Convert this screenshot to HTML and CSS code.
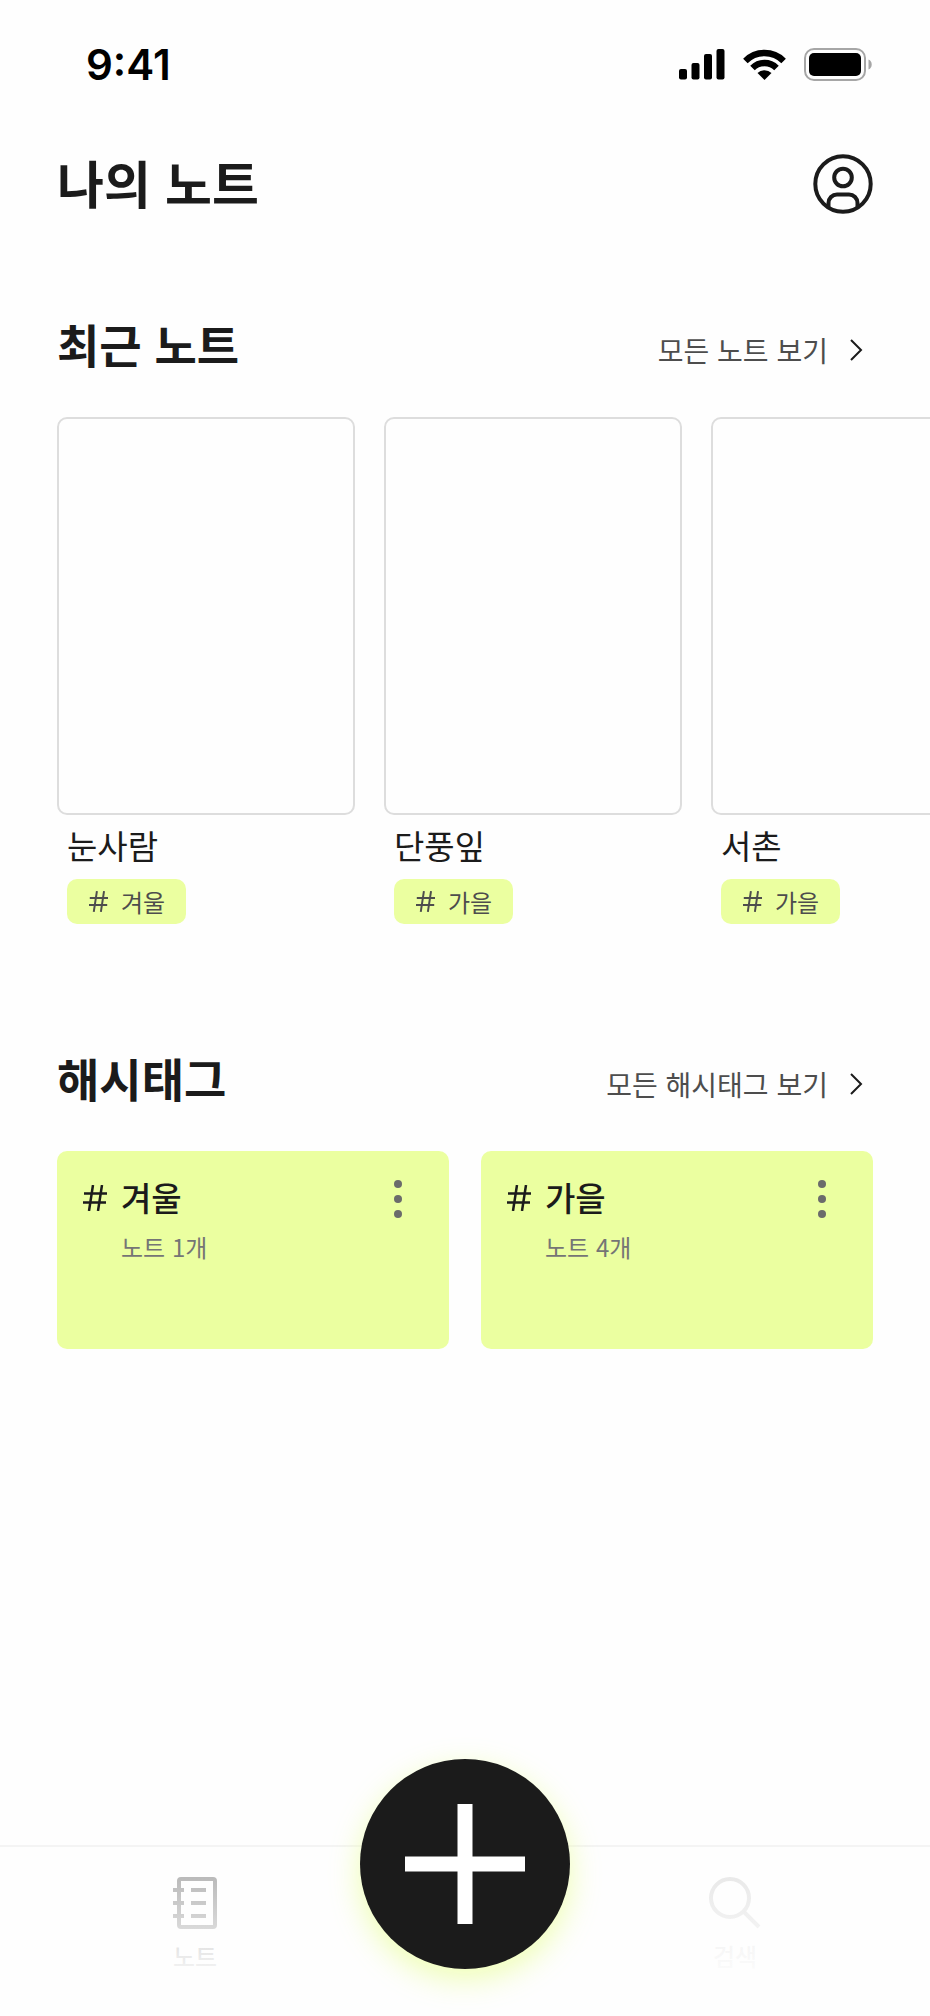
FILE: index.html
```html
<!DOCTYPE html>
<html lang="ko">
<head>
    <meta charset="UTF-8">
    <meta name="viewport" content="width=device-width, initial-scale=1.0">
    <title>나의 노트</title>
    <link rel="stylesheet" href="styles.css">
</head>
<body>
<svg class="sprite" aria-hidden="true">
    <symbol id="hash" viewBox="0 0 24 26">
        <path d="M10 0 6 26M19 0 15 26M1 8.5H24M0 17.5H23"/>
    </symbol>
    <symbol id="chevron" viewBox="0 0 13 22">
        <path d="M1 1 11 11 1 21"/>
    </symbol>
    <symbol id="dots" viewBox="0 0 8 38">
        <circle cx="4" cy="4" r="4"/>
        <circle cx="4" cy="19" r="4"/>
        <circle cx="4" cy="34" r="4"/>
    </symbol>
</svg>

<div class="status-bar">
    <span class="time">9:41</span>
    <div class="status-icons">
        <svg width="46" height="31" viewBox="0 0 46 31">
            <rect x="0" y="20" width="8" height="10.5" rx="2"/>
            <rect x="12.5" y="14" width="8" height="16.5" rx="2"/>
            <rect x="25" y="5" width="8" height="25.5" rx="2"/>
            <rect x="37.5" y="0" width="8" height="30.5" rx="2"/>
        </svg>
        <svg width="43" height="31" viewBox="0 0 43 31">
            <path class="arc" d="M2.4 11.9a27 27 0 0 1 38.2 0M9.5 19a17 17 0 0 1 24 0"/>
            <path d="M21.5 31 14.5 24a10 10 0 0 1 14 0z"/>
        </svg>
        <svg width="69" height="33" viewBox="0 0 69 33">
            <rect class="shell" x="1" y="1" width="60" height="31" rx="9"/>
            <rect x="5" y="5" width="52" height="23" rx="5"/>
            <path class="cap" d="M64.5 11.5a5.5 5.5 0 0 1 0 10z"/>
        </svg>
    </div>
</div>

<header>
    <h1>나의 노트</h1>
    <button class="btn-profile" aria-label="내 프로필">
        <svg width="60" height="60" viewBox="0 0 60 60">
            <circle cx="30" cy="30" r="27.7"/>
            <circle cx="30" cy="23.5" r="8.8"/>
            <path d="M15.5 54v-5a8.5 8.5 0 0 1 8.5-8.5h12a8.5 8.5 0 0 1 8.5 8.5v5"/>
        </svg>
    </button>
</header>

<main>
    <section>
        <div class="section-head">
            <h2>최근 노트</h2>
            <a href="#notes">모든 노트 보기 <svg class="chevron"><use href="#chevron"/></svg></a>
        </div>
        <div class="note-list">
            <article class="note">
                <div class="cover"></div>
                <h3>눈사람</h3>
                <span class="tag"><svg class="hash"><use href="#hash"/></svg>겨울</span>
            </article>
            <article class="note">
                <div class="cover"></div>
                <h3>단풍잎</h3>
                <span class="tag"><svg class="hash"><use href="#hash"/></svg>가을</span>
            </article>
            <article class="note">
                <div class="cover"></div>
                <h3>서촌</h3>
                <span class="tag"><svg class="hash"><use href="#hash"/></svg>가을</span>
            </article>
        </div>
    </section>

    <section>
        <div class="section-head">
            <h2>해시태그</h2>
            <a href="#tags">모든 해시태그 보기 <svg class="chevron"><use href="#chevron"/></svg></a>
        </div>
        <div class="tag-grid">
            <article class="tag-card">
                <svg class="hash"><use href="#hash"/></svg>
                <div class="tag-info">
                    <h3>겨울</h3>
                    <p>노트 1개</p>
                </div>
                <button class="btn-more" aria-label="더보기"><svg><use href="#dots"/></svg></button>
            </article>
            <article class="tag-card">
                <svg class="hash"><use href="#hash"/></svg>
                <div class="tag-info">
                    <h3>가을</h3>
                    <p>노트 4개</p>
                </div>
                <button class="btn-more" aria-label="더보기"><svg><use href="#dots"/></svg></button>
            </article>
        </div>
    </section>
</main>

<nav>
    <a href="#notes" class="active">
        <svg width="45" height="52" viewBox="0 0 45 52">
            <rect x="6" y="2" width="36" height="48" rx="2"/>
            <path d="M0 13h11M0 26h11M0 39h11M18 13h15M18 26h15M18 39h15"/>
        </svg>
        노트
    </a>
    <button class="btn-add" aria-label="새 노트">
        <svg width="120" height="120" viewBox="0 0 120 120">
            <path d="M60 0v120M0 60h120"/>
        </svg>
    </button>
    <a href="#search">
        <svg width="52" height="52" viewBox="0 0 52 52">
            <circle cx="21" cy="21" r="19"/>
            <path d="M34.5 34.5 50 50"/>
        </svg>
        검색
    </a>
</nav>
</body>
</html>
```
FILE: styles.css
```css
* {
    margin: 0;
    padding: 0;
    box-sizing: border-box;
}
body {
    display: flex;
    flex-direction: column;
    min-height: 100vh;
    font-family: 'Noto Sans CJK KR', 'Noto Sans', sans-serif;
    color: #1b1b1b;
    background: #fefefe;
    overflow-x: hidden;
}
a {
    color: inherit;
    text-decoration: none;
}
button {
    border: none;
    background: none;
    cursor: pointer;
}
svg {
    display: block;
    flex-shrink: 0;
}
.sprite {
    position: absolute;
    width: 0;
    height: 0;
}

/* status bar */
.status-bar {
    display: flex;
    justify-content: space-between;
    align-items: center;
    height: 128px;
    padding: 0 57px 0 86px;
    color: #000;
}
.time {
    font-family: Inter, sans-serif;
    font-size: 42px;
    font-weight: 600;
}
.status-icons {
    display: flex;
    align-items: center;
    gap: 18px;
}
.arc {
    fill: none;
    stroke: #000;
    stroke-width: 6.4;
}
.shell {
    fill: none;
    stroke: #a6a6a6;
    stroke-width: 2;
}
.cap {
    fill: #a6a6a6;
}

/* header */
header {
    display: flex;
    justify-content: space-between;
    align-items: center;
    height: 112px;
    padding: 0 57px;
}
h1 {
    padding-bottom: 4px;
    font-size: 51px;
    font-weight: 700;
    line-height: 72px;
}
.btn-profile svg {
    fill: none;
    stroke: #1b1b1b;
    stroke-width: 4;
}

/* sections */
section {
    margin-top: 71px;
}
section + section {
    margin-top: 121px;
}
.section-head {
    display: flex;
    justify-content: space-between;
    align-items: flex-end;
    padding: 0 67px 0 57px;
    margin-bottom: 42px;
}
h2 {
    font-size: 46px;
    font-weight: 700;
    line-height: 64px;
}
.section-head a {
    display: flex;
    align-items: center;
    gap: 22px;
    font-size: 28px;
    line-height: 50px;
    color: #4d4d4d;
}
.chevron {
    width: 13px;
    height: 22px;
    fill: none;
    stroke: #1b1b1b;
    stroke-width: 2;
}
.hash {
    width: 24px;
    height: 26px;
    fill: none;
    stroke: currentColor;
    stroke-width: 2.5;
}

/* recent notes */
.note-list {
    display: flex;
    gap: 29px;
    padding-left: 57px;
    overflow-x: auto;
    scrollbar-width: none;
}
.note {
    flex: 0 0 298px;
}
.cover {
    height: 398px;
    border: 2px solid #ddd;
    border-radius: 10px;
}
.note h3 {
    margin: 8px 10px 12px;
    font-size: 33px;
    font-weight: 400;
    line-height: 44px;
}
.tag {
    display: inline-flex;
    align-items: center;
    gap: 13px;
    height: 45px;
    margin-left: 10px;
    padding: 0 21px 0 22px;
    border-radius: 10px;
    background: #ebffa0;
    color: #4d4d4d;
    font-size: 24px;
    line-height: 44px;
    vertical-align: top;
}
.tag .hash {
    width: 19px;
    height: 21px;
}

/* hashtags */
.tag-grid {
    display: grid;
    grid-template-columns: 1fr 1fr;
    gap: 32px;
    padding: 0 57px;
}
.tag-card {
    display: flex;
    align-items: flex-start;
    gap: 14px;
    min-height: 198px;
    padding: 24px 37px 26px 26px;
    border-radius: 10px;
    background: #ebffa0;
}
.tag-card .hash {
    margin-top: 10px;
}
.tag-info {
    flex: 1;
}
.tag-info h3 {
    font-size: 33px;
    font-weight: 500;
    line-height: 44px;
}
.tag-info p {
    margin-top: 10px;
    font-size: 24px;
    line-height: 36px;
    color: #757575;
}
.btn-more {
    padding: 5px 10px;
}
.btn-more svg {
    width: 8px;
    height: 38px;
    fill: #6b6b6b;
}

/* bottom navigation */
nav {
    position: relative;
    display: grid;
    grid-template-columns: 1fr 210px 1fr;
    height: 171px;
    margin-top: auto;
    padding: 0 30px;
    border-top: 2px solid #f4f4f4;
}
nav::after {
    content: '';
    position: absolute;
    inset: 0;
    background: linear-gradient(rgba(254, 254, 254, 0.62), #fefefe 84%);
    pointer-events: none;
}
nav a {
    display: flex;
    flex-direction: column;
    align-items: center;
    gap: 11px;
    padding-top: 30px;
    font-size: 24px;
    font-weight: 500;
    line-height: 32px;
    color: #b8b8b8;
}
nav a.active {
    color: #1b1b1b;
}
nav a svg {
    fill: none;
    stroke: currentColor;
    stroke-width: 4;
}
.btn-add {
    z-index: 1;
    display: flex;
    justify-content: center;
    align-items: center;
    width: 210px;
    height: 210px;
    margin-top: -88px;
    border-radius: 50%;
    background: #1b1b1b;
    box-shadow: 0 10px 30px rgba(235, 255, 160, 0.8);
}
.btn-add svg {
    stroke: #fff;
    stroke-width: 15;
}
```
